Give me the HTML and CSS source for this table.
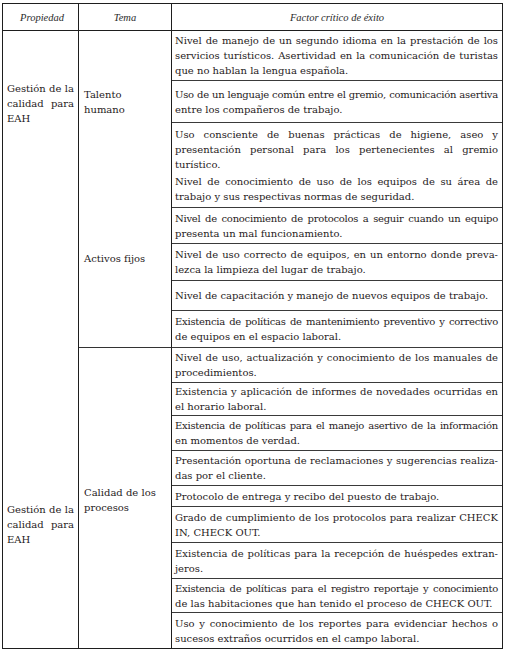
FILE: index.html
```html
<!DOCTYPE html>
<html lang="es">
<head>
<meta charset="utf-8">
<link rel="stylesheet" href="styles.css">
</head>
<body>
<div class="table">
  <div class="hd c1h">Propiedad</div>
  <div class="hd c2h">Tema</div>
  <div class="hd c3h">Factor crítico de éxito</div>

  <div class="prop">
    <div class="lbl lbl1">
      <span class="ln j">Gestión de la</span>
      <span class="ln j">calidad para</span>
      <span class="ln">EAH</span>
    </div>
    <div class="lbl lbl2">
      <span class="ln j">Gestión de la</span>
      <span class="ln j">calidad para</span>
      <span class="ln">EAH</span>
    </div>
  </div>

  <div class="tema tema-a">
    <div class="t1"><span class="ln">Talento</span><span class="ln">humano</span></div>
    <div class="t2"><span class="ln">Activos fijos</span></div>
  </div>
  <div class="tema tema-b">
    <div class="t3"><span class="ln">Calidad de los</span><span class="ln">procesos</span></div>
  </div>

  <div class="f"><span class="ln j">Nivel de manejo de un segundo idioma en la prestación de los</span><span class="ln j">servicios turísticos. Asertividad en la comunicación de turistas</span><span class="ln">que no hablan la lengua española.</span></div>
  <div class="f"><span class="ln j tight">Uso de un lenguaje común entre el gremio, comunicación asertiva</span><span class="ln">entre los compañeros de trabajo.</span></div>
  <div class="f"><p class="par"><span class="ln j">Uso consciente de buenas prácticas de higiene, aseo y</span><span class="ln j">presentación personal para los pertenecientes al gremio</span><span class="ln">turístico.</span></p><p class="par"><span class="ln j">Nivel de conocimiento de uso de los equipos de su área de</span><span class="ln">trabajo y sus respectivas normas de seguridad.</span></p></div>
  <div class="f"><span class="ln j tight">Nivel de conocimiento de protocolos a seguir cuando un equipo</span><span class="ln">presenta un mal funcionamiento.</span></div>
  <div class="f"><span class="ln j">Nivel de uso correcto de  equipos, en un entorno donde preva-</span><span class="ln">lezca la limpieza del lugar de trabajo.</span></div>
  <div class="f"><span class="ln">Nivel de capacitación y manejo de nuevos equipos de trabajo.</span></div>
  <div class="f"><span class="ln j tight">Existencia de políticas de mantenimiento preventivo y correctivo</span><span class="ln">de equipos en el espacio laboral.</span></div>
  <div class="f"><span class="ln j">Nivel de uso, actualización y conocimiento de los manuales de</span><span class="ln">procedimientos.</span></div>
  <div class="f"><span class="ln j">Existencia y aplicación de informes de novedades ocurridas en</span><span class="ln">el horario laboral.</span></div>
  <div class="f"><span class="ln j tight">Existencia de políticas para el manejo asertivo de la información</span><span class="ln">en momentos de verdad.</span></div>
  <div class="f"><span class="ln j">Presentación oportuna de reclamaciones y sugerencias realiza-</span><span class="ln">das por el cliente.</span></div>
  <div class="f"><span class="ln">Protocolo de entrega y recibo del puesto de trabajo.</span></div>
  <div class="f"><span class="ln j">Grado de cumplimiento de los protocolos para realizar CHECK</span><span class="ln">IN, CHECK OUT.</span></div>
  <div class="f"><span class="ln j">Existencia de políticas para la recepción de huéspedes extran-</span><span class="ln">jeros.</span></div>
  <div class="f"><span class="ln j tight">Existencia de políticas para el registro reportaje y conocimiento</span><span class="ln">de las habitaciones que han tenido el proceso de CHECK OUT.</span></div>
  <div class="f last"><span class="ln j">Uso y conocimiento de los reportes para evidenciar hechos o</span><span class="ln">sucesos extraños ocurridos en el campo laboral.</span></div>
</div>
</body>
</html>
```
FILE: styles.css
```css
html, body {
  margin: 0;
  padding: 0;
  background: #ffffff;
}

body {
  padding: 3px 0 0 2px;
  font-family: "DejaVu Serif", "Liberation Serif", serif;
  font-size: 10px;
  color: #1f1b1c;
}

.table {
  box-sizing: border-box;
  width: 501px;
  border: 1px solid #1e1e1e;
  display: grid;
  grid-template-columns: 76px 93px 1fr;
  grid-template-rows: 27px 50px 42px 85px 36px 37px 30px 37px 35px 33px 35px 35px 21px 36px 36px 34px 35px;
}

.hd {
  box-sizing: border-box;
  display: flex;
  align-items: center;
  justify-content: center;
  border-bottom: 1px solid #1e1e1e;
  font-family: "Liberation Serif", serif;
  font-style: italic;
  font-size: 10.5px;
  color: #2a2a2a;
  padding-top: 1px;
}

.c1h, .c2h {
  border-right: 1px solid #1e1e1e;
}

.c1h { padding-left: 3px; }

.ln {
  display: block;
  line-height: 15px;
  white-space: nowrap;
}

.j {
  text-align: justify;
  text-align-last: justify;
}

.tight {
  letter-spacing: -0.25px;
}

.prop {
  grid-column: 1;
  grid-row: 2 / -1;
  box-sizing: border-box;
  border-right: 1px solid #1e1e1e;
  padding: 50px 4px 0 4px;
}

.lbl2 {
  margin-top: 376px;
}

.tema {
  grid-column: 2;
  box-sizing: border-box;
  border-right: 1px solid #1e1e1e;
  padding-left: 5px;
}

.tema-a {
  grid-row: 2 / 9;
  border-bottom: 1px solid #333;
  padding-top: 56px;
}

.t2 {
  margin-top: 134px;
}

.tema-b {
  grid-row: 9 / -1;
  padding-top: 137px;
}

.f {
  grid-column: 3;
  box-sizing: border-box;
  border-bottom: 1px solid #3a3a3a;
  padding: 0 4px 0 3px;
  display: flex;
  flex-direction: column;
  justify-content: center;
}

.f.last {
  border-bottom: none;
}

.par {
  margin: 0;
}

.par + .par {
  margin-top: 2px;
}
```
